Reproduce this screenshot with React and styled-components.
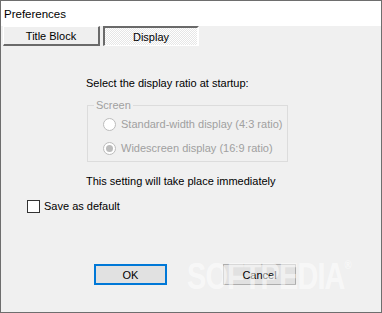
import styled, { createGlobalStyle } from "styled-components";

const GlobalStyle = createGlobalStyle`
  html, body {
    margin: 0;
    padding: 0;
    background: #f0f0f0;
  }
  * {
    box-sizing: border-box;
  }
`;

const WindowBlock = styled.div`
  position: relative;
  width: 382px;
  height: 313px;
  border: 1px solid #6e6e6e;
  display: flex;
  flex-direction: column;
  font-family: "Liberation Sans", Arial, sans-serif;
  font-size: 11px;
  color: #000;
  overflow: hidden;
`;

const TitleBarBlock = styled.div`
  height: 25px;
  background: #fff;
  display: flex;
  align-items: center;
  padding-left: 3px;
  padding-top: 1px;
  font-size: 11.5px;
`;

const ClientBlock = styled.div`
  flex: 1;
  background: #f0f0f0;
  display: flex;
  flex-direction: column;
`;

const TabRowBlock = styled.div`
  display: flex;
  gap: 3px;
  padding-left: 2px;
`;

const TabBlock = styled.div`
  width: ${(p) => p.$width}px;
  height: 20px;
  display: flex;
  align-items: center;
  justify-content: center;
  padding-top: ${(p) => (p.$pressed ? "1px" : "0")};
  border-style: solid;
  border-width: ${(p) => (p.$pressed ? "2px 2px 1px 2px" : "1px 2px 2px 1px")};
  border-color: ${(p) =>
    p.$pressed ? "#6a6a6a #fff #fff #6a6a6a" : "#fff #6a6a6a #6a6a6a #fff"};
  background: ${(p) =>
    p.$pressed
      ? "repeating-conic-gradient(#ffffff 0 25%, #e6e6e6 0 50%) 0 0 / 2px 2px"
      : "#efefef"};
`;

const PanelBlock = styled.div`
  display: flex;
  flex-direction: column;
  align-items: flex-start;
  padding-left: 85px;
  margin-top: 31px;
`;

const LineText = styled.div`
  height: 13px;
  line-height: 13px;
  white-space: nowrap;
  color: ${(p) => (p.$disabled ? "#a0a0a0" : "#000")};
`;

const GroupBoxBlock = styled.div`
  position: relative;
  width: 201px;
  margin-top: 15px;
  margin-left: 1px;
  border: 1px solid #dcdcdc;
  padding: 12px 0 6px 15px;
  display: flex;
  flex-direction: column;
  gap: 11px;
`;

const LegendText = styled.span`
  position: absolute;
  top: -7px;
  left: 6px;
  padding: 0 2px;
  background: #f0f0f0;
  line-height: 13px;
  color: #a0a0a0;
`;

const RadioRow = styled.div`
  display: flex;
  align-items: center;
  gap: 5px;
  height: 13px;
`;

const RadioDot = styled.span`
  width: 13px;
  height: 13px;
  border-radius: 50%;
  border: 1px solid #bcbcbc;
  background: #fff;
  display: flex;
  align-items: center;
  justify-content: center;
  &::after {
    content: "";
    width: 7px;
    height: 7px;
    border-radius: 50%;
    background: ${(p) => (p.$checked ? "#bcbcbc" : "transparent")};
  }
`;

const NoteText = styled(LineText)`
  margin-top: 13px;
`;

const CheckRow = styled.div`
  display: flex;
  align-items: center;
  gap: 4px;
  margin-top: 12px;
  margin-left: 26px;
  height: 13px;
`;

const CheckBox = styled.span`
  width: 13px;
  height: 13px;
  border: 1px solid #333;
  background: #fff;
`;

const ButtonRowBlock = styled.div`
  display: flex;
  gap: 56px;
  padding-left: 93px;
  margin-top: 51px;
`;

const DialogButton = styled.button`
  width: 73px;
  height: 21px;
  padding: 0;
  font-family: inherit;
  font-size: 11px;
  color: #000;
  background: #e1e1e1;
  border: ${(p) => (p.$default ? "2px solid #0078d7" : "1px solid #adadad")};
`;

const Watermark = styled.div`
  position: absolute;
  left: 186px;
  top: 258px;
  font-family: "Liberation Sans", Arial, sans-serif;
  font-weight: 700;
  font-size: 36px;
  line-height: 36px;
  letter-spacing: -1px;
  color: rgba(255, 255, 255, 0.55);
  transform: scaleX(0.8);
  transform-origin: left top;
  white-space: nowrap;
  pointer-events: none;
  sup {
    font-size: 12px;
    vertical-align: top;
    line-height: 12px;
  }
`;

function App() {
  return (
    <>
      <GlobalStyle />
      <WindowBlock>
        <TitleBarBlock>Preferences</TitleBarBlock>
        <ClientBlock>
          <TabRowBlock>
            <TabBlock $width={97}>Title Block</TabBlock>
            <TabBlock $width={96} $pressed>
              Display
            </TabBlock>
          </TabRowBlock>
          <PanelBlock>
            <LineText>Select the display ratio at startup:</LineText>
            <GroupBoxBlock>
              <LegendText>Screen</LegendText>
              <RadioRow>
                <RadioDot />
                <LineText $disabled>Standard-width display (4:3 ratio)</LineText>
              </RadioRow>
              <RadioRow>
                <RadioDot $checked />
                <LineText $disabled>Widescreen display (16:9 ratio)</LineText>
              </RadioRow>
            </GroupBoxBlock>
            <NoteText>This setting will take place immediately</NoteText>
          </PanelBlock>
          <CheckRow>
            <CheckBox />
            <LineText>Save as default</LineText>
          </CheckRow>
          <ButtonRowBlock>
            <DialogButton $default>OK</DialogButton>
            <DialogButton>Cancel</DialogButton>
          </ButtonRowBlock>
        </ClientBlock>
        <Watermark>
          SOFTPEDIA<sup>®</sup>
        </Watermark>
      </WindowBlock>
    </>
  );
}

export default App;
